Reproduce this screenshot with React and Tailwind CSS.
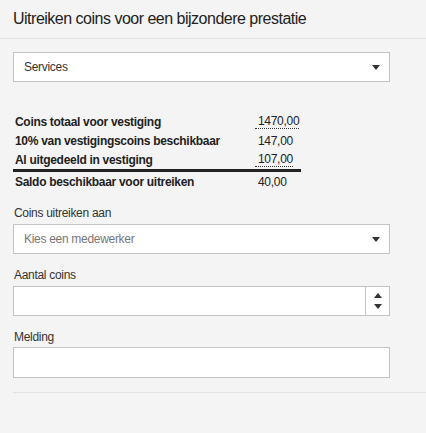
import React from "react";

function Caret({ up = false }) {
  return (
    <svg width="8" height="5" viewBox="0 0 8 5" className="block">
      <polygon points={up ? "0,5 8,5 4,0" : "0,0 8,0 4,5"} fill="#333" />
    </svg>
  );
}

function SelectBox({ value, placeholder }) {
  return (
    <div className="w-[377px] h-[30px] bg-white border border-[#c4c4c4] flex items-center justify-between pl-[10px] pr-[9px]">
      <span className={value ? "text-[12px] tracking-[-0.3px] text-[#333]" : "text-[12px] tracking-[-0.3px] text-[#777]"}>{value || placeholder}</span>
      <Caret />
    </div>
  );
}

const rows = [
  { label: "Coins totaal voor vestiging", value: "1470,00", dotted: true },
  { label: "10% van vestigingscoins beschikbaar", value: "147,00" },
  { label: "Al uitgedeeld in vestiging", value: "107,00", dotted: true },
];

export default function App() {
  return (
    <div className="w-[426px] h-[433px] bg-[#f4f4f4] text-[#333] font-['Liberation_Sans',Arial,sans-serif]">
      <div className="h-[39px] border-b border-[#e2e2e2] flex items-center px-[13px]">
        <h1 className="text-[16px] tracking-[-0.5px] text-[#222]">Uitreiken coins voor een bijzondere prestatie</h1>
      </div>

      <div className="pl-[13px]">
        <div className="mt-[13px]">
          <SelectBox value="Services" />
        </div>

        <div className="mt-[30px] w-[288px] text-[12px] tracking-[-0.3px] text-[#222]">
          {rows.map((r) => (
            <div key={r.label} className="h-[19px] flex items-center">
              <span className="w-[242px] pl-[2px] font-bold">{r.label}</span>
              <span className={r.dotted ? "pl-[3px] leading-[13px] border-b border-dotted border-[#333]" : "pl-[3px]"}>{r.value}</span>
            </div>
          ))}
          <div className="h-[3px] bg-[#222]" />
          <div className="h-[19px] flex items-center">
            <span className="w-[242px] pl-[2px] font-bold">Saldo beschikbaar voor uitreiken</span>
            <span className="pl-[3px]">40,00</span>
          </div>
        </div>

        <div className="mt-[15px] mb-[3px] text-[12px] tracking-[-0.3px] leading-[15px] pl-px">Coins uitreiken aan</div>
        <SelectBox placeholder="Kies een medewerker" />

        <div className="mt-[14px] mb-[3px] text-[12px] tracking-[-0.3px] leading-[15px] pl-px">Aantal coins</div>
        <div className="w-[377px] h-[30px] bg-white border border-[#c4c4c4] flex">
          <div className="flex-1" />
          <div className="w-[24px] border-l border-[#c4c4c4] flex flex-col items-center justify-center gap-[6px]">
            <Caret up />
            <Caret />
          </div>
        </div>

        <div className="mt-[14px] mb-[2px] text-[12px] tracking-[-0.3px] leading-[15px] pl-px">Melding</div>
        <div className="w-[377px] h-[31px] bg-white border border-[#c4c4c4]" />

        <div className="mt-[14px] h-px bg-[#e2e2e2]" />
      </div>
    </div>
  );
}
